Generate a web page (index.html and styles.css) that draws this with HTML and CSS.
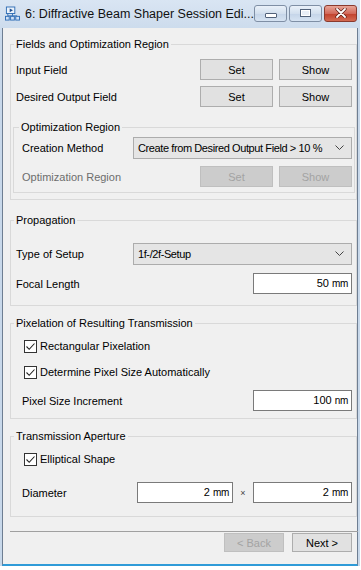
FILE: index.html
```html
<!DOCTYPE html>
<html lang="en">
<head>
    <meta charset="UTF-8">
    <title>Diffractive Beam Shaper Session Editor</title>
    <link rel="stylesheet" href="styles.css">
</head>
<body>
    <div class="window">
        <div class="titlebar">
            <svg class="app-icon" width="16" height="16" viewBox="0 0 16 16">
                <rect x="1.5" y="0.5" width="9" height="7" fill="#eaf2fb" stroke="#2f6db5"/>
                <path d="M5 2 L8.5 4 L5 6 Z" fill="#1f4f8f"/>
                <path d="M3 7.5 V10 M8 7.5 V10 M3 10 H13" stroke="#2f6db5" fill="none"/>
                <rect x="0.5" y="10.5" width="4" height="4" fill="#cfe0f5" stroke="#2f6db5"/>
                <rect x="6" y="10.5" width="4" height="4" fill="#cfe0f5" stroke="#2f6db5"/>
                <rect x="11.5" y="10.5" width="4" height="4" fill="#cfe0f5" stroke="#2f6db5"/>
            </svg>
            <span class="title">6: Diffractive Beam Shaper Session Edi...</span>
            <div class="caption-buttons">
                <span class="cap cap-min"><i></i></span>
                <span class="cap cap-max"><i></i></span>
                <span class="cap cap-close">
                    <svg width="12" height="10" viewBox="0 0 12 10">
                        <path d="M2 1 L10 9 M10 1 L2 9" stroke="#5a1a12" stroke-width="3.2" stroke-linecap="round"/>
                        <path d="M2 1 L10 9 M10 1 L2 9" stroke="#fff" stroke-width="1.8" stroke-linecap="round"/>
                    </svg>
                </span>
            </div>
        </div>

        <div class="client">
            <fieldset class="group group-fields">
                <legend>Fields and Optimization Region</legend>
                <div class="row">
                    <span class="label">Input Field</span>
                    <button class="btn">Set</button>
                    <button class="btn">Show</button>
                </div>
                <div class="row row-gap">
                    <span class="label">Desired Output Field</span>
                    <button class="btn">Set</button>
                    <button class="btn">Show</button>
                </div>

                <fieldset class="group inner">
                    <legend>Optimization Region</legend>
                    <div class="row">
                        <span class="label">Creation Method</span>
                        <div class="combo">
                            <span>Create from Desired Output Field &gt; 10 %</span>
                            <svg width="9" height="5" viewBox="0 0 9 5"><path d="M0.5 0.5 L4.5 4.5 L8.5 0.5" fill="none" stroke="#444"/></svg>
                        </div>
                    </div>
                    <div class="row row-opt">
                        <span class="label disabled">Optimization Region</span>
                        <button class="btn" disabled>Set</button>
                        <button class="btn" disabled>Show</button>
                    </div>
                </fieldset>
            </fieldset>

            <fieldset class="group group-prop">
                <legend>Propagation</legend>
                <div class="row">
                    <span class="label">Type of Setup</span>
                    <div class="combo">
                        <span>1f-/2f-Setup</span>
                        <svg width="9" height="5" viewBox="0 0 9 5"><path d="M0.5 0.5 L4.5 4.5 L8.5 0.5" fill="none" stroke="#444"/></svg>
                    </div>
                </div>
                <div class="row row-focal">
                    <span class="label">Focal Length</span>
                    <div class="field">50 <small>mm</small></div>
                </div>
            </fieldset>

            <fieldset class="group group-pix">
                <legend>Pixelation of Resulting Transmission</legend>
                <div class="check-row">
                    <span class="check"><svg width="11" height="11" viewBox="0 0 11 11"><path d="M1.5 5.5 L4.2 8.3 L9.5 2.5" fill="none" stroke="#222" stroke-width="1.1"/></svg></span>
                    Rectangular Pixelation
                </div>
                <div class="check-row row-check2">
                    <span class="check"><svg width="11" height="11" viewBox="0 0 11 11"><path d="M1.5 5.5 L4.2 8.3 L9.5 2.5" fill="none" stroke="#222" stroke-width="1.1"/></svg></span>
                    Determine Pixel Size Automatically
                </div>
                <div class="row row-increment">
                    <span class="label">Pixel Size Increment</span>
                    <div class="field">100 <small>nm</small></div>
                </div>
            </fieldset>

            <fieldset class="group group-aperture">
                <legend>Transmission Aperture</legend>
                <div class="check-row">
                    <span class="check"><svg width="11" height="11" viewBox="0 0 11 11"><path d="M1.5 5.5 L4.2 8.3 L9.5 2.5" fill="none" stroke="#222" stroke-width="1.1"/></svg></span>
                    Elliptical Shape
                </div>
                <div class="row row-diameter">
                    <span class="label">Diameter</span>
                    <div class="field field-small">2 <small>mm</small></div>
                    <span class="times">×</span>
                    <div class="field">2 <small>mm</small></div>
                </div>
            </fieldset>

            <div class="footer">
                <button class="btn btn-nav" disabled>&lt; Back</button>
                <button class="btn btn-nav">Next &gt;</button>
            </div>
        </div>
    </div>
</body>
</html>
```

FILE: styles.css
```css
body {
    margin: 0;
    background: #ffffff;
    font-family: "Liberation Sans", Arial, sans-serif;
    font-size: 11px;
    color: #000;
}
.window {
    width: 360px;
    height: 566px;
    box-sizing: border-box;
    padding: 0 2px;
    background: linear-gradient(#d9e5f3, #c8d8ea 40px);
    display: flex;
    flex-direction: column;
}

/* title bar */
.titlebar {
    height: 28px;
    display: flex;
    align-items: center;
    padding-left: 3px;
}
.app-icon {
    margin-right: 5px;
}
.title {
    font-size: 12.5px;
    color: #111;
    flex: 1;
    white-space: nowrap;
}
.caption-buttons {
    display: flex;
    gap: 2px;
    margin-top: -2px;
    margin-right: 1px;
}
.cap {
    width: 31px;
    height: 15px;
    border: 1px solid #7f8fa5;
    border-radius: 3px;
    background: linear-gradient(#eaf1f9, #d2dfee 50%, #c4d4e8 51%, #d6e3f2);
    display: flex;
    align-items: center;
    justify-content: center;
}
.cap-min i {
    width: 10px;
    height: 3px;
    margin-top: 4px;
    background: #fff;
    border: 1px solid #52627a;
    border-radius: 1px;
}
.cap-max i {
    width: 9px;
    height: 6px;
    border: 1px solid #52627a;
    background: #e9eff7;
    box-shadow: inset 0 0 0 1px #fff;
}
.cap-close {
    width: 31px;
    border-color: #8a3a2e;
    background: linear-gradient(#e8a597, #d2695a 50%, #c1402c 51%, #d36a52);
}

/* client area */
.client {
    flex: 1;
    background: #f0f0f0;
    border-left: 1px solid #6e7e92;
    border-right: 1px solid #6e7e92;
    border-bottom: 2px solid #2f9bd8;
    box-shadow: 0 1px 0 #333;
    padding: 9px 0 0 7px;
    display: flex;
    flex-direction: column;
}

/* group boxes */
.group {
    margin: 0;
    padding: 0 4px 0 0;
    border: 1px solid #d9d9d9;
    min-width: 0;
}
.group legend {
    margin-left: 3px;
    padding: 0 2px;
    line-height: 14px;
}
.group-fields {
    padding-top: 8px;
    padding-bottom: 6px;
}
.group-prop {
    margin-top: 13px;
    padding-top: 16px;
    padding-bottom: 11px;
}
.group-pix {
    margin-top: 10px;
    padding-top: 8px;
    padding-bottom: 7px;
}
.group-aperture {
    margin-top: 10px;
    padding-top: 8px;
    padding-bottom: 13px;
}
.inner {
    margin: 13px -3px 0 2px;
    padding: 3px 2px 5px 0;
}
.inner legend {
    margin-left: 5px;
}

.row {
    display: flex;
    align-items: center;
    height: 21px;
}
.row .label {
    flex: 1;
    padding-left: 5px;
}
.group-pix .row .label,
.group-aperture .row .label {
    padding-left: 11px;
}
.inner .row .label {
    padding-left: 8px;
}
.label.disabled {
    color: #6d6d6d;
}
.row-gap {
    margin-top: 6px;
}
.inner .row:first-child {
    height: 22px;
}
.row-opt {
    margin-top: 8px;
}
.row-focal {
    margin-top: 9px;
}
.row-increment {
    margin-top: 10px;
}
.row-diameter {
    margin-top: 15px;
}

/* buttons */
.btn {
    width: 73px;
    height: 21px;
    margin-left: 6px;
    padding: 0;
    font-family: inherit;
    font-size: 11px;
    color: #000;
    background: #e1e1e1;
    border: 1px solid #adadad;
}
.btn:disabled {
    background: #cccccc;
    border-color: #bfbfbf;
    color: #a3a3a3;
}

/* combo box */
.combo {
    width: 219px;
    height: 22px;
    box-sizing: border-box;
    background: #e5e5e5;
    border: 1px solid #acacac;
    display: flex;
    align-items: center;
    justify-content: space-between;
    padding: 0 7px 0 4px;
    white-space: nowrap;
}
.combo span {
    letter-spacing: -0.4px;
}

/* text fields */
.field {
    width: 99px;
    height: 21px;
    box-sizing: border-box;
    background: #fff;
    border: 1px solid #7a7a7a;
    text-align: right;
    line-height: 19px;
    padding-right: 3px;
}
.field small {
    font-size: 10px;
    letter-spacing: -0.3px;
}
.field-small {
    width: 96px;
}
.times {
    width: 20px;
    text-align: center;
    font-size: 9px;
    color: #444;
}

/* checkboxes */
.check-row {
    display: flex;
    align-items: center;
    height: 16px;
    padding-left: 13px;
}
.row-check2 {
    margin-top: 10px;
}
.check {
    width: 13px;
    height: 13px;
    box-sizing: border-box;
    border: 1px solid #333;
    background: #fff;
    margin-right: 3px;
    display: flex;
    align-items: center;
    justify-content: center;
}

/* wizard footer */
.footer {
    margin-top: 14px;
    margin-right: -1px;
    border-top: 1px solid #a0a0a0;
    padding: 1px 6px 0 0;
    display: flex;
    justify-content: flex-end;
    gap: 8px;
}
.btn-nav {
    width: 60px;
    height: 19px;
    margin-left: 0;
}
```
